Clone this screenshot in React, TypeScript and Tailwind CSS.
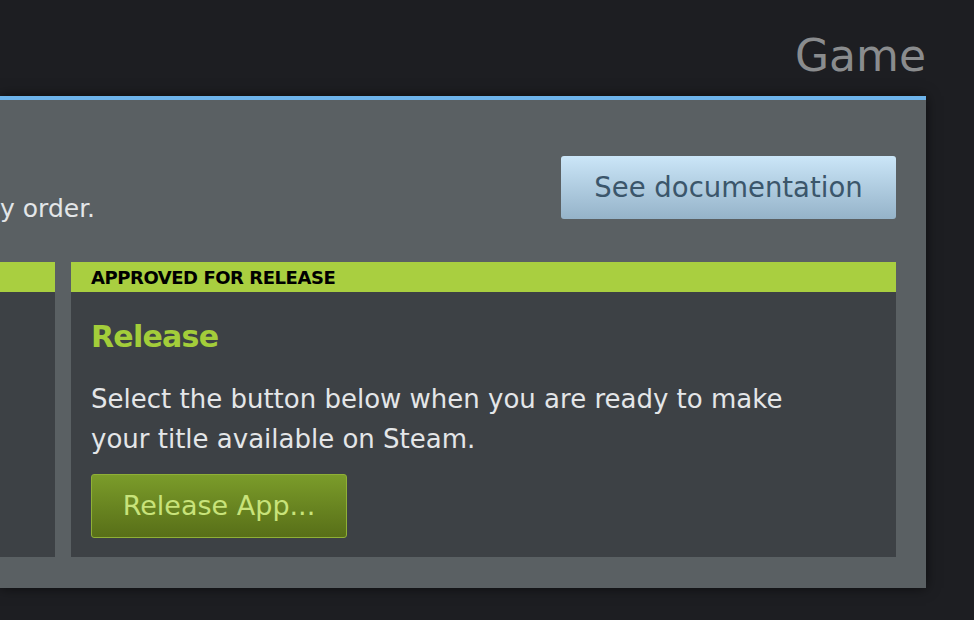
export default function App() {
  return (
    <div
      className="w-[974px] h-[620px] bg-[#1d1e22] overflow-hidden flex flex-col"
      style={{ fontFamily: '"DejaVu Sans", Verdana, sans-serif' }}
    >
      <div className="h-[96px] w-[926px] flex items-end justify-end pb-[18px]">
        <h1 className="text-[44px] leading-none text-[#8a8c8e]">Game</h1>
      </div>
      <section className="w-[926px] h-[492px] bg-[#5a6063] border-t-4 border-[#6db3ea] shadow-[0_0_12px_rgba(0,0,0,0.6)] pr-[30px] flex flex-col">
        <div className="flex items-start justify-between h-[162px] pt-[56px]">
          <p className="text-[25px] leading-none text-[#e3e6e8] mt-[40px]">y order.</p>
          <button className="w-[335px] h-[63px] rounded-[3px] bg-gradient-to-b from-[#cbe6f8] to-[#95b3c9] text-[#3b566b] text-[27.5px]">
            See documentation
          </button>
        </div>
        <div className="flex gap-[16px] h-[295px]">
          <div className="w-[55px] flex flex-col">
            <div className="h-[30px] bg-[#a9cf40]" />
            <div className="flex-1 bg-[#3d4145]" />
          </div>
          <div className="flex-1 flex flex-col">
            <div className="h-[30px] bg-[#a9cf40] pl-[20px] flex items-center">
              <span className="text-[18px] font-bold text-black tracking-tight">APPROVED FOR RELEASE</span>
            </div>
            <div className="flex-1 bg-[#3d4145] pl-[20px] pt-[30px]">
              <h2 className="text-[30px] font-bold text-[#a3cd3a] leading-none tracking-tight">Release</h2>
              <p className="mt-[27px] text-[26px] leading-[40px] text-[#e4e6e8] w-[700px]">
                Select the button below when you are ready to make your title available on Steam.
              </p>
              <button className="mt-[15px] w-[256px] h-[64px] rounded-[3px] border border-[#8fb036] bg-gradient-to-b from-[#7b9c2a] to-[#586f18] text-[#c8e37a] text-[27px]">
                Release App...
              </button>
            </div>
          </div>
        </div>
      </section>
    </div>
  );
}
